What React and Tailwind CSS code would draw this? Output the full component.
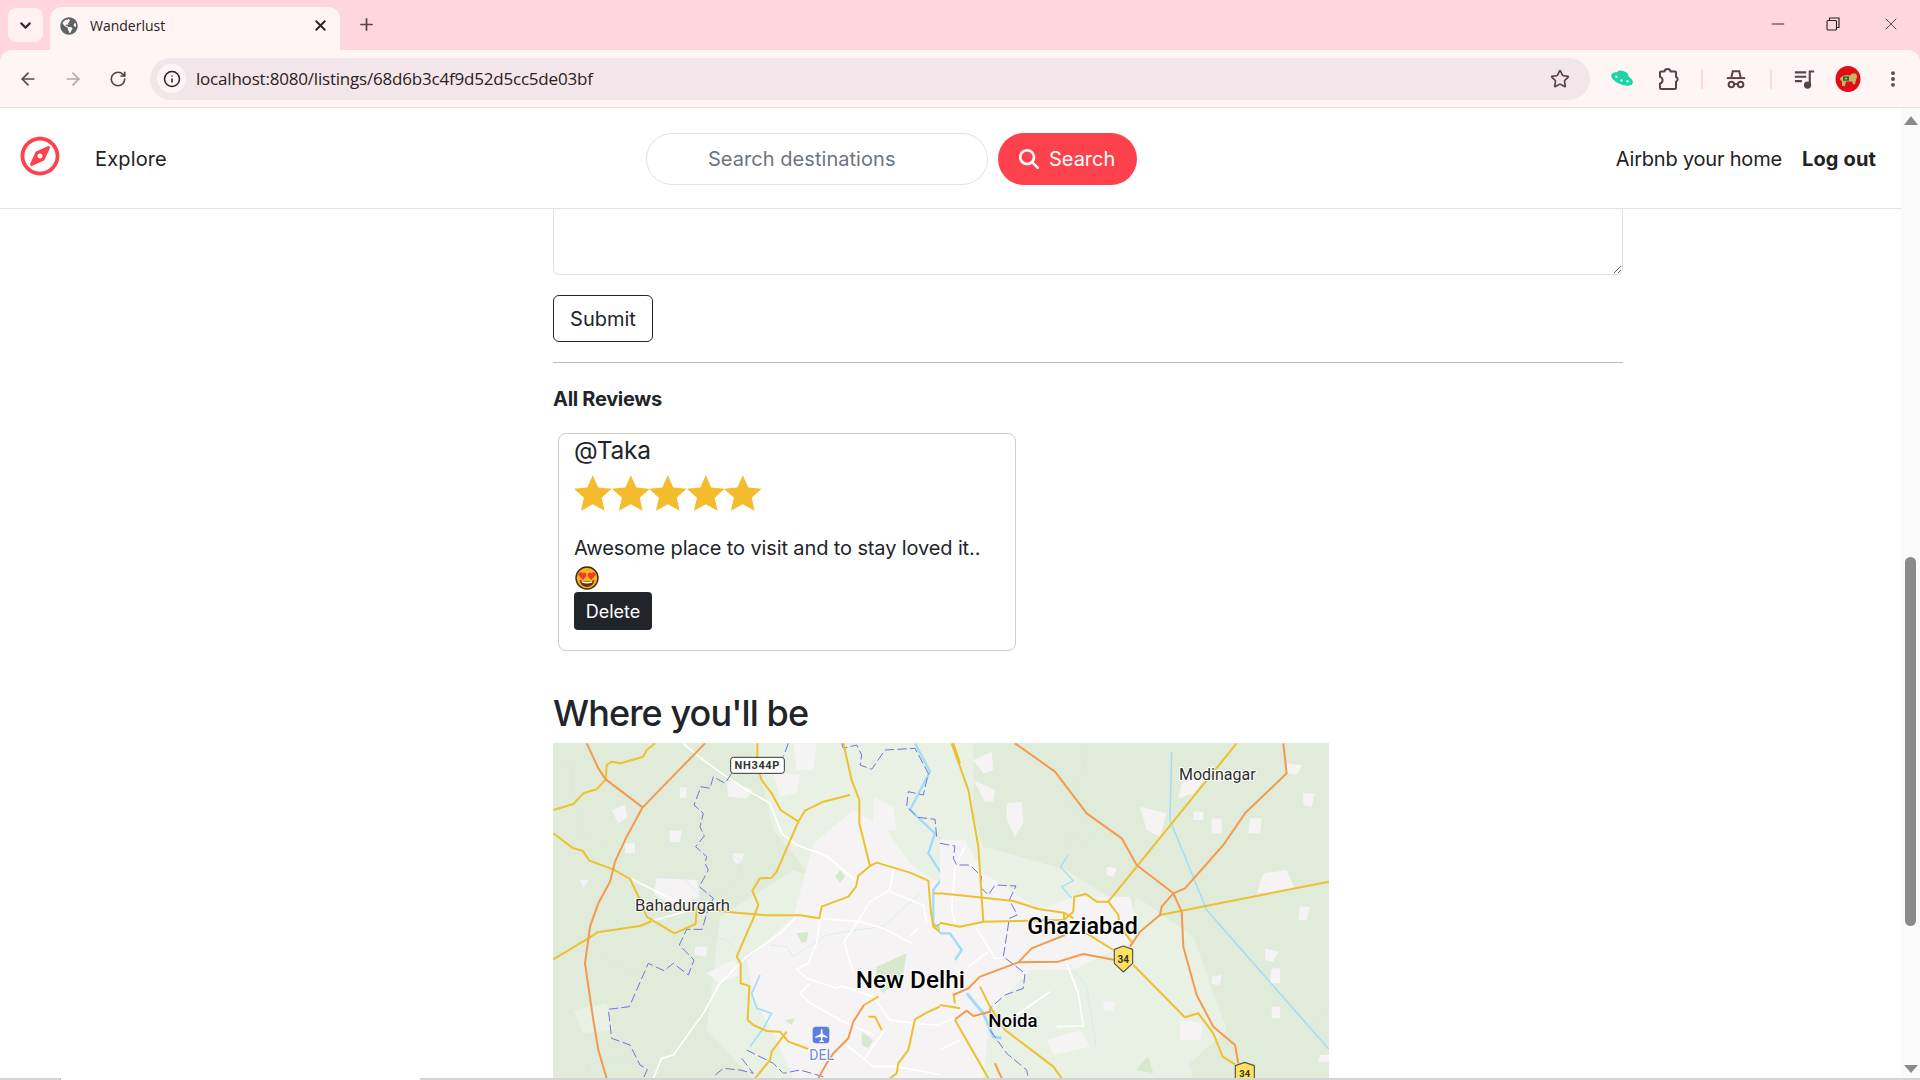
import React from 'react';
import { FaRegCompass, FaGlobeAmericas } from 'react-icons/fa';
import { FaMagnifyingGlass } from 'react-icons/fa6';
import { ChevronDown, X, Plus, ArrowLeft, ArrowRight, RotateCw, Info, Star, EllipsisVertical, Minus } from 'lucide-react';

const inkIcon = 'text-[#5a4346]';

// icon drawn for the hat + glasses extension
const HatGlasses = () => (
  <svg width="22" height="22" viewBox="0 0 24 24" fill="none" stroke="#5a4346" strokeWidth="2.2">
    <path d="M7 10 L8.5 3.5 H15.5 L17 10" />
    <path d="M2 11 H22" />
    <circle cx="7" cy="18" r="3" />
    <circle cx="17" cy="18" r="3" />
    <path d="M10 17.5 H14" />
  </svg>
);

const MusicQueue = () => (
  <svg width="21" height="21" viewBox="0 0 24 24" fill="none" stroke="#5a4346" strokeWidth="2.4">
    <path d="M1 5 H14 M1 10 H14 M1 15 H9" />
    <path d="M18 20 V4 H23" />
    <circle cx="15.5" cy="19.5" r="3" fill="#5a4346" />
  </svg>
);

const PuzzlePiece = () => (
  <svg width="24" height="24" viewBox="0 0 24 24" fill="none" stroke="#5a4346" strokeWidth="2" strokeLinejoin="round">
    <path d="M8.5 4.5 a3 2.6 0 0 1 6 0 H19 a1 1 0 0 1 1 1 V10 a2.4 2.4 0 0 1 0 4.6 V21 a1 1 0 0 1 -1 1 H5 a1 1 0 0 1 -1 -1 V16.5 a3.4 3.4 0 0 0 0 -6.6 V5.5 a1 1 0 0 1 1 -1 Z" />
  </svg>
);

const Ufo = () => (
  <svg width="24" height="20" viewBox="0 0 24 20">
    <g transform="rotate(22 12 10)">
      <ellipse cx="12" cy="10" rx="11.5" ry="5.5" fill="#1fd3a5" />
      <ellipse cx="11" cy="5.5" rx="6" ry="3.5" fill="#1fd3a5" />
      <circle cx="6" cy="10" r="1.2" fill="#fff" />
      <circle cx="12" cy="11.5" r="1.2" fill="#fff" />
      <circle cx="18" cy="10" r="1.2" fill="#fff" />
    </g>
  </svg>
);

const Avatar = () => (
  <svg width="26" height="26" viewBox="0 0 26 30" preserveAspectRatio="none">
    <ellipse cx="13" cy="15" rx="12.5" ry="15" fill="#e00d14" />
    <path d="M5 14 Q9 9 15 11 Q18 7 21 9 Q23 12 21 16 L20 21 L18 21 L17 18 L11 18 L10 23 L7 23 L7 18 Q5 17 5 14Z" fill="#c9b36a" />
    <path d="M8 12 L14 12 L14 17 L8 17Z" fill="#1f6b3a" />
    <circle cx="11" cy="14.5" r="1.3" fill="#e8a020" />
  </svg>
);

const HeartEyes = () => (
  <svg width="24" height="24" viewBox="0 0 24 24">
    <circle cx="12" cy="12" r="11" fill="#fbb11a" stroke="#3a2a12" strokeWidth="1.4" />
    <path d="M4.5 14 Q12 17 19.5 14 Q18 21 12 21 Q6 21 4.5 14Z" fill="#6b2a12" />
    <path d="M6.5 15 Q12 16.8 17.5 15 L17 16.8 Q12 18 7 16.8Z" fill="#fff" />
    <path d="M8 14 L3.6 9.6 Q2.6 7 5 6.4 Q6.8 6 7.6 7.6 Q9 6 10.6 7 Q12 8.6 11 10.4Z" fill="#ee3b2f" />
    <path d="M16 14 L20.4 9.6 Q21.4 7 19 6.4 Q17.2 6 16.4 7.6 Q15 6 13.4 7 Q12 8.6 13 10.4Z" fill="#ee3b2f" />
  </svg>
);

const RatingStar = () => (
  <svg width="37.6" height="36" viewBox="0 0 38 36">
    <polygon points="19,0 24.6,12.4 38,13.8 28,22.8 31,36 19,29.4 7,36 10,22.8 0,13.8 13.4,12.4" fill="#f4bc2c" />
  </svg>
);

const BrowserBar = () => (
  <div className="bg-[#ffd6de] font-['Open_Sans',sans-serif]">
    <div className="h-[50px] flex items-end pl-2 relative">
      <div className="w-[35px] h-[34px] mb-2 rounded-lg bg-[#fff0f1] flex items-center justify-center">
        <ChevronDown size={17} strokeWidth={3} className="text-[#3a2b2e]" />
      </div>
      <div className="ml-[7px] w-[290px] h-[43px] bg-[#fff5f4] rounded-t-xl flex items-center pl-[10px] pr-[11px] pb-[6px]">
        <FaGlobeAmericas size={18} className="text-[#5f6368]" />
        <span className="ml-[12px] text-[14px] text-[#2b2022] flex-1">Wanderlust</span>
        <X size={17} strokeWidth={2.6} className="text-[#2b2022]" />
      </div>
      <Plus size={19} strokeWidth={2.2} className="ml-[17px] mb-[16px] text-[#5a4346]" />
      <div className="ml-auto flex items-center h-full pb-[2px]">
        <Minus size={20} strokeWidth={1.1} className="text-[#222] mr-[38px]" />
        <svg width="14" height="14" viewBox="0 0 14 14" fill="none" stroke="#222" strokeWidth="1.1" className="mr-[41px]">
          <rect x="1" y="3.5" width="9.5" height="9.5" rx="1" />
          <path d="M3.5 3 V1 H13 V10.5 H11" />
        </svg>
        <X size={20} strokeWidth={1} className="text-[#333] mr-[19px]" />
      </div>
    </div>
    <div className="h-[58px] bg-[#fff5f4] border-b border-[#f5d9de] rounded-t-xl flex items-center pl-[5px]">
      <div className={`w-[45px] flex justify-center ${inkIcon}`}><ArrowLeft size={20} strokeWidth={2} /></div>
      <div className="w-[45px] flex justify-center text-[#b3a5a8]"><ArrowRight size={20} strokeWidth={2} /></div>
      <div className={`w-[45px] flex justify-center ${inkIcon}`}><RotateCw size={18} strokeWidth={2.2} /></div>
      <div className="ml-[10px] w-[1440px] h-[42px] rounded-full bg-[#f2e6ea] flex items-center pl-[7px] pr-[20px]">
        <div className="w-[29px] h-[29px] rounded-full bg-[#fff5f4] flex items-center justify-center">
          <Info size={18} strokeWidth={2} className="text-[#2b2022]" />
        </div>
        <span className="ml-[10px] text-[17px] text-[#2b2022] tracking-[-0.2px]">localhost:8080/listings/68d6b3c4f9d52d5cc5de03bf</span>
        <Star size={20} strokeWidth={2} className={`ml-auto ${inkIcon}`} />
      </div>
      <div className="ml-[9px] w-[46px] flex justify-center"><Ufo /></div>
      <div className="w-[46px] flex justify-center"><PuzzlePiece /></div>
      <div className="ml-[10px] w-[2px] h-[20px] bg-[#ffd6de]" />
      <div className="ml-[10px] w-[46px] flex justify-center"><HatGlasses /></div>
      <div className="ml-[11px] w-[2px] h-[20px] bg-[#ffd6de]" />
      <div className="ml-[9px] w-[46px] flex justify-center"><MusicQueue /></div>
      <div className="w-[42px] flex justify-center"><Avatar /></div>
      <div className={`w-[48px] flex justify-center ${inkIcon}`}><EllipsisVertical size={20} strokeWidth={2.6} /></div>
    </div>
  </div>
);

const Nav = () => (
  <nav className="h-[101px] shrink-0 border-b border-[#dee2e6] flex items-center pl-5 pr-[25px] pt-[2px] text-[#222222] text-[20px] tracking-[-0.2px]">
    <FaRegCompass size={40} className="text-[#fe424d] mb-[6px]" />
    <a className="ml-[35px] tracking-[0.15px]">Explore</a>
    <div className="ml-[479px] w-[342px] h-[52px] rounded-full border border-[#dee2e6] flex items-center pl-[61px] text-[#6c757d] tracking-[0.05px]">
      Search destinations
    </div>
    <button className="ml-[10px] w-[139px] h-[52px] rounded-full bg-[#fe424d] text-white flex items-center pl-[21px]">
      <FaMagnifyingGlass size={20} />
      <span className="ml-[10px] tracking-[0px]">Search</span>
    </button>
    <a className="ml-auto">Airbnb your home</a>
    <a className="ml-[20px] font-bold tracking-[0.15px]">Log out</a>
  </nav>
);

const Review = () => (
  <div className="mt-[20px] ml-[5px] w-[458px] h-[218px] border border-[#ccc] rounded-lg pl-[15px] text-[#212529]">
    <div className="text-[24.5px] leading-[32px] tracking-[-0.2px]">@Taka</div>
    <div className="mt-[9px] flex h-[36px]">
      {[1, 2, 3, 4, 5].map((n) => (
        <RatingStar key={n} />
      ))}
    </div>
    <p className="mt-[22px] text-[20px] leading-[30px] tracking-[-0.12px]">Awesome place to visit and to stay loved it..</p>
    <div className="h-[29px] pl-[1px] pt-[3px]"><HeartEyes /></div>
    <button className="block w-[78px] h-[38px] rounded bg-[#212529] text-white text-[18px]">Delete</button>
  </div>
);

const DelhiMap = () => (
  <svg width="776" height="335" viewBox="0 0 776 335" className="block">
    <rect width="776" height="335" fill="#e0ecd9" />
    {/* everything below is in the coordinates of two 3x crops of the map */}
    <g transform="translate(-13,-13) scale(0.33333)" fill="none" strokeLinejoin="round">
      <g fill="#e8f1e3" stroke="none">
        <path d="M540,560 L760,420 L1000,500 L1260,640 L1260,1050 L640,1050 L500,900 Z" />
        <path d="M640,40 L1300,40 L1300,460 L800,420 L700,300 Z" />
        <path d="M100,840 L200,820 L220,900 L130,910Z" />
      </g>
      <g fill="#f5f3f3" stroke="none">
        <path d="M620,690 L760,560 L820,340 L940,240 L1040,300 L1110,400 L1180,450 L1300,460 L1300,1050 L760,1045 L700,910 L640,800 Z" />
        <path d="M500,730 L580,690 L610,730 L540,760Z" />
        <path d="M350,445 L470,450 L480,500 L400,530 L340,490Z" />
        <path d="M215,240 L255,225 L262,262 L235,280Z" />
        <path d="M388,302 L425,302 L420,336 L390,336Z" />
        <path d="M420,172 L440,172 L440,204 L420,204Z" />
        <path d="M255,340 L285,340 L285,370 L255,370Z" />
        <path d="M120,450 L145,450 L130,475Z" />
        <path d="M560,150 L640,180 L620,205 L565,200Z" />
        <path d="M700,130 L780,135 L770,190 L720,200Z" />
        <path d="M760,40 L830,40 L820,120 L770,120Z" />
        <path d="M465,650 L500,650 L500,680 L465,675Z" />
        <path d="M575,370 L612,370 L605,400 L585,400Z" />
        <path d="M1000,200 L1060,230 L1070,300 L1000,300Z" />
      </g>
      <g fill="#d8e8cf" stroke="none">
        <path d="M900,420 L915,440 L900,458 L885,440Z" />
        <path d="M770,610 L805,605 L800,635 L785,638Z" />
        <path d="M1010,710 L1100,670 L1090,730 L1030,790 L1005,760Z" />
        <path d="M965,905 L1000,930 L985,955 L965,945Z" />
        <path d="M735,870 L765,865 L755,885Z" />
      </g>
      <path d="M1125,40 L1170,125 L1110,240 L1185,310 L1165,370 L1210,440 L1180,480 L1180,580 L1240,630 L1260,700" stroke="#9fdcf9" strokeWidth="7" />
      <path d="M660,735 L635,790 L650,835 L695,850 L670,895 L630,950" stroke="#9fdcf9" strokeWidth="4.5" />
      <g stroke="#cde9f2" strokeWidth="2">
        <path d="M40,108 H95 V180 L130,260 L120,310 L210,345" />
        <path d="M350,440 L430,445 L475,490 L545,490 L600,440 L605,395 L570,370" />
        <path d="M40,670 L160,660 L300,740 M480,610 L560,630 L620,700" />
        <path d="M690,645 L740,650 L760,680 L860,615 L950,600 L1030,590 L1140,490" />
        <path d="M130,1045 L150,1000 L230,990 L340,1010" />
      </g>
      <g stroke="#ffffff" strokeWidth="5">
        <path d="M430,40 L470,75 L545,130 L620,180 L690,220 L725,310 L770,345 L860,378 L945,450" />
        <path d="M275,447 L380,500 L470,540 M335,573 L470,535" />
        <path d="M770,560 L720,610 L620,680 L540,760 L490,850 L400,975 L365,985 L340,1045" />
        <path d="M838,565 L960,575 L1030,595 L1115,640 M1110,620 L1135,595" />
        <path d="M840,565 L830,640 L805,700 L770,718 L800,745 L890,775 L905,768 L1000,800 L1050,870 L1125,880 L1260,890" />
        <path d="M1060,420 L1050,480 L990,515 L950,580 L912,635 L940,730" />
        <path d="M1050,485 L1150,525 L1160,580" />
        <path d="M810,760 L780,790 L805,815 L900,870 L1000,915" />
        <path d="M1030,905 L975,985 M920,945 L1000,1010 L1070,1010 L1260,1045" />
      </g>
      <g stroke="#6f72da" strokeWidth="3" strokeDasharray="28 10">
        <path d="M745,40 L730,80 M575,130 L555,160 L520,140 L510,175 L483,170 L462,225 L490,250 L480,290 L493,318 L467,350 L500,380 L495,400 L505,420 L478,470 L520,505 L500,550 L487,598 L440,598 L418,645 L462,690 L445,735 L400,700 L372,722 L325,700 L268,830 L205,838 L215,925 L270,945 L300,1005 L322,1018 L310,1045" />
        <path d="M905,40 L910,55 L950,45 L965,75 L960,105 L995,118 L1035,60 L1125,55 L1165,130 L1150,195 L1105,185 L1100,230 L1135,262 L1185,268 L1190,320 L1245,350 L1250,400 L1260,410" />
        <path d="M620,960 L650,975 L700,1000 L730,1030 L780,1020 L850,1040 M605,985 L640,1030 L600,1020 L550,1015 L520,1040" />
      </g>
      <g stroke="#ecc12f" strokeWidth="6">
        <path d="M40,240 L100,222 L130,190 L170,178 L197,148 L200,105 L215,95 L242,100 L310,80 L320,60 L345,40" />
        <path d="M40,310 L100,355 L128,362 L148,392 L220,418 L270,447 L300,510 L320,560 L403,610 L467,582 L470,535 L590,548 L680,556 L780,556 L838,565 L845,530 L925,500 L948,470 L955,437 L990,408 L1010,398 L1110,428 L1165,452 L1172,540 L1180,590 L1220,622 L1245,690 L1245,780 L1248,825" />
        <path d="M40,688 L145,625 L172,607 L300,588 L335,573" />
        <path d="M652,40 L652,110 L665,150 L695,190 L722,240 L775,275" />
        <path d="M930,195 L850,215 L795,242 L775,275 L710,425 L695,443 L660,445 L637,482 L655,525 L640,565 L590,680 L602,700 L602,760 L628,768 L623,870 L640,885 L680,903 L720,905 L745,935 L805,957" />
        <path d="M910,40 L935,150 L958,210 L958,280 L990,408" />
        <path d="M740,905 L695,965 L690,990 L645,1045" />
        <path d="M1015,800 L972,825" />
        <path d="M985,860 L1005,860 L1025,900" />
        <path d="M1260,825 L1210,825 L1160,848 L1125,868 L1105,960 L1075,1000 L1070,1030 L1050,1045" />
        <path d="M1180,490 L1260,495 M1185,590 L1210,578 L1260,590 M1240,40 L1260,100 M1220,690 L1245,690" />
      </g>
      <g stroke="#f39a4e" strokeWidth="6">
        <path d="M140,40 L175,115 L197,148 L308,232" />
        <path d="M495,40 L308,232 L260,320 L225,395 L210,455 L175,520 L150,590 L135,700 L160,870 L175,960 L200,1045" />
        <path d="M972,825 L940,875 L925,925 L880,970 L860,1000 L835,1045" />
      </g>
      <g>
        <rect x="572" y="82" width="161" height="48" rx="8" fill="#fff" stroke="#333" strokeWidth="3" />
        <text x="652" y="116" textAnchor="middle" fontSize="33" fontWeight="700" letterSpacing="2" fill="#333" stroke="none" className="font-['Roboto',sans-serif]">NH344P</text>
      </g>
      <rect x="818" y="890" width="50" height="50" rx="10" fill="#5b7fdc" stroke="none" />
      <path d="M843,898 L847,898 L848,912 L862,920 L862,924 L848,920 L847,930 L852,934 L852,936 L838,936 L838,934 L843,930 L842,920 L826,924 L826,920 L842,912Z" fill="#fff" stroke="none" />
      <g stroke="#ffffff" strokeWidth="6" style={{ paintOrder: 'stroke' }} className="font-['Roboto',sans-serif]">
        <text x="845" y="990" textAnchor="middle" fontSize="42" fill="#6a87db">DEL</text>
        <text x="285" y="543" fontSize="50" fill="#2e2e2e">Bahadurgarh</text>
      </g>
    </g>
    <g transform="translate(387,-13) scale(0.33333)" fill="none" strokeLinejoin="round">
      <g fill="#e8f1e3" stroke="none">
        <path d="M0,40 L30,40 L130,350 L380,420 L600,560 L760,1045 L0,1045Z" />
        <path d="M590,500 L760,620 L860,900 L700,1045 L400,1045Z" />
      </g>
      <g fill="#f5f3f3" stroke="none">
        <path d="M0,330 L75,330 L130,430 L300,540 L400,500 L570,500 L600,620 L400,720 L270,720 L150,850 L130,1045 L0,1045Z" />
        <path d="M100,90 L155,65 L160,120 L130,130Z" />
        <path d="M100,150 L165,180 L160,215 L135,215Z" />
        <path d="M200,220 L245,215 L250,280 L225,320 L200,270Z" />
        <path d="M600,230 L680,250 L660,320 L620,300Z" />
        <path d="M725,160 L810,130 L760,190 L715,205Z" />
        <path d="M815,265 L845,265 L845,310 L815,310Z" />
        <path d="M760,245 L790,245 L790,270 L760,270Z" />
        <path d="M930,265 L965,265 L960,310 L925,310Z" />
        <path d="M1040,100 L1085,105 L1070,135 L1040,130Z" />
        <path d="M1090,190 L1125,190 L1115,230 L1090,225Z" />
        <path d="M970,430 L1040,420 L1065,480 L950,490Z" />
        <path d="M1080,530 L1110,530 L1100,570 L1075,570Z" />
        <path d="M975,655 L1015,665 L1000,695 L975,690Z" />
        <path d="M995,715 L1020,715 L1020,760 L990,760Z" />
        <path d="M815,740 L845,735 L840,765 L815,762Z" />
        <path d="M995,830 L1020,830 L1020,865 L995,865Z" />
        <path d="M490,815 L525,815 L520,845 L490,840Z" />
        <path d="M320,930 L420,900 L450,950 L340,975Z" />
        <path d="M720,870 L790,880 L780,930 L720,930Z" />
        <path d="M500,410 L530,415 L520,440 L500,435Z" />
        <path d="M1140,975 L1167,975 L1167,995 L1135,995Z" />
      </g>
      <path d="M605,1000 L625,980 L640,1030 L590,1020Z" fill="#d8e8cf" stroke="none" />
      <path d="M695,65 L690,270 L800,540 L1167,958" stroke="#9fdcf9" strokeWidth="4.5" />
      <path d="M80,790 L130,850 L160,920 L185,925" stroke="#9fdcf9" strokeWidth="9" />
      <path d="M0,610 L30,610 L65,660 L45,690" stroke="#9fdcf9" strokeWidth="7" />
      <path d="M360,410 L400,452 L365,470 L395,505 M385,375 L362,410" stroke="#9fdcf9" strokeWidth="3.5" />
      <g stroke="#cde9f2" strokeWidth="2">
        <path d="M405,40 L440,50 L430,120 L395,165 L420,215" />
        <path d="M375,225 L405,235 L440,290 L470,320 L440,340 L400,310 L375,315 L385,375" />
        <path d="M1110,890 L1167,830" />
        <path d="M385,700 L440,770 L470,960" />
      </g>
      <g stroke="#ffffff" strokeWidth="5">
        <path d="M75,350 L45,410 L35,540 L45,580" />
        <path d="M110,595 L165,685 L190,685" />
        <path d="M85,710 L145,665" />
        <path d="M330,785 L230,855" />
        <path d="M380,700 L415,790 L430,888 L350,890" />
        <path d="M0,880 L55,860 M0,960 L60,930" />
      </g>
      <path d="M0,340 L45,348 L40,385 L50,405 L90,405 L125,440 L120,470 L145,495 L165,465 L228,468 L208,510 L232,555 L208,565 L190,680 L255,730 L250,775 L195,795 L150,835 L150,900 L200,970 L260,1020 L265,1045" stroke="#6f72da" strokeWidth="3" strokeDasharray="28 10" />
      <g stroke="#ecc12f" strokeWidth="6">
        <path d="M35,40 L85,180 L115,350 L130,575" />
        <path d="M0,490 L130,503 L220,513 L295,537 L372,548 L400,565" />
        <path d="M0,578 L60,590 L130,575 L372,570" />
        <path d="M372,548 L372,570 L400,545 L403,500 L438,492 L470,515 L505,515 L535,555 L540,590 L578,640" />
        <path d="M890,40 L505,515" />
        <path d="M440,610 L520,660" />
        <path d="M580,705 L735,862 L775,850 L820,910 L848,980 L885,1003" />
        <path d="M660,555 L1167,455" />
        <path d="M0,825 L60,835 M45,870 L145,1045 M150,830 L195,900 L340,1010 L365,1045 M120,770 L150,830 M40,790 L45,820" />
      </g>
      <g stroke="#f39a4e" strokeWidth="6">
        <path d="M225,40 L345,125 L440,250 L545,325 L590,405 L700,490 L725,545 L730,650 L770,795 L820,890 L885,945 L895,1000" />
        <path d="M1030,40 L1040,130 L915,250 L850,345 L735,475 L700,490 L665,530 L660,555 L600,605 L570,650" />
        <path d="M375,615 L275,655 L235,697 L120,740 L85,775 L40,795" />
        <path d="M235,697 L355,695 L430,672 L525,690" />
        <path d="M45,868 L80,842 L100,858 L150,845" />
        <path d="M165,1000 L185,1045" />
      </g>
      <path d="M550,648 L578,658 V700 L550,726 L523,700 V658Z" fill="#ffe15b" stroke="#555" strokeWidth="3.5" />
      <text x="550" y="698" textAnchor="middle" fontSize="30" fontWeight="700" fill="#333" className="font-['Roboto',sans-serif]">34</text>
      <path d="M914,997 L943,1007 V1060 H886 V1007Z" fill="#ffe15b" stroke="#555" strokeWidth="3.5" />
      <text x="914" y="1040" textAnchor="middle" fontSize="28" fontWeight="700" fill="#333" className="font-['Roboto',sans-serif]">34</text>
      <g stroke="#ffffff" strokeWidth="6" style={{ paintOrder: 'stroke' }} className="font-['Roboto',sans-serif]">
        <text x="717" y="150" fontSize="48" fill="#2e2e2e">Modinagar</text>
        <text x="262" y="612" fontSize="70" fontWeight="500" fill="#000">Ghaziabad</text>
        <text x="145" y="892" fontSize="56" fontWeight="500" fill="#000">Noida</text>
        {/* sits across both crops, so it is painted last; x is 947 in the left crop */}
        <text x="-253" y="775" fontSize="73" fontWeight="500" fill="#000">New Delhi</text>
      </g>
    </g>
  </svg>
);

const Scrollbar = () => (
  <div className="w-[19px] shrink-0 bg-[#fafafa] flex flex-col items-center">
    <svg width="14" height="9" viewBox="0 0 14 9" className="mt-[8px]"><path d="M7 0 L14 9 H0Z" fill="#8a8a8a" /></svg>
    <div className="mt-[432px] w-[11px] h-[369px] rounded-full bg-[#8a8a8a]" />
    <svg width="14" height="8" viewBox="0 0 14 8" className="mt-auto mb-[5px]"><path d="M0 0 H14 L7 8Z" fill="#8a8a8a" /></svg>
  </div>
);

export default function App() {
  return (
    <div className="h-screen w-full overflow-hidden flex flex-col bg-white font-['Inter',sans-serif]">
      <BrowserBar />
      <div className="flex flex-1 min-h-0">
        <div className="flex-1 min-w-0 flex flex-col">
          <Nav />
          <main className="ml-[553px] w-[1070px] flex-1 min-h-0 overflow-hidden">
            <textarea className="block w-full h-[66px] border border-t-0 border-[#dee2e6] rounded-b-md outline-none" />
            <button className="block mt-[20px] w-[100px] h-[47px] border border-[#212529] rounded-md text-[20px] text-[#212529] tracking-[0px]">Submit</button>
            <hr className="mt-[20px] border-t border-[#bdbdbd]" />
            <h4 className="mt-[22px] text-[20px] leading-[28px] font-bold text-[#212529] tracking-[-0.3px]">All Reviews</h4>
            <Review />
            <h3 className="mt-[40px] text-[36px] leading-[44px] font-medium text-[#212529] tracking-[-0.9px]">Where you'll be</h3>
            <div className="mt-[8px]"><DelhiMap /></div>
          </main>
        </div>
        <Scrollbar />
      </div>
      <div className="h-[2px] shrink-0 bg-[#d4d4d4] pl-[60px]">
        <div className="w-[360px] h-full bg-white border-l border-[#bbb]" />
      </div>
    </div>
  );
}
